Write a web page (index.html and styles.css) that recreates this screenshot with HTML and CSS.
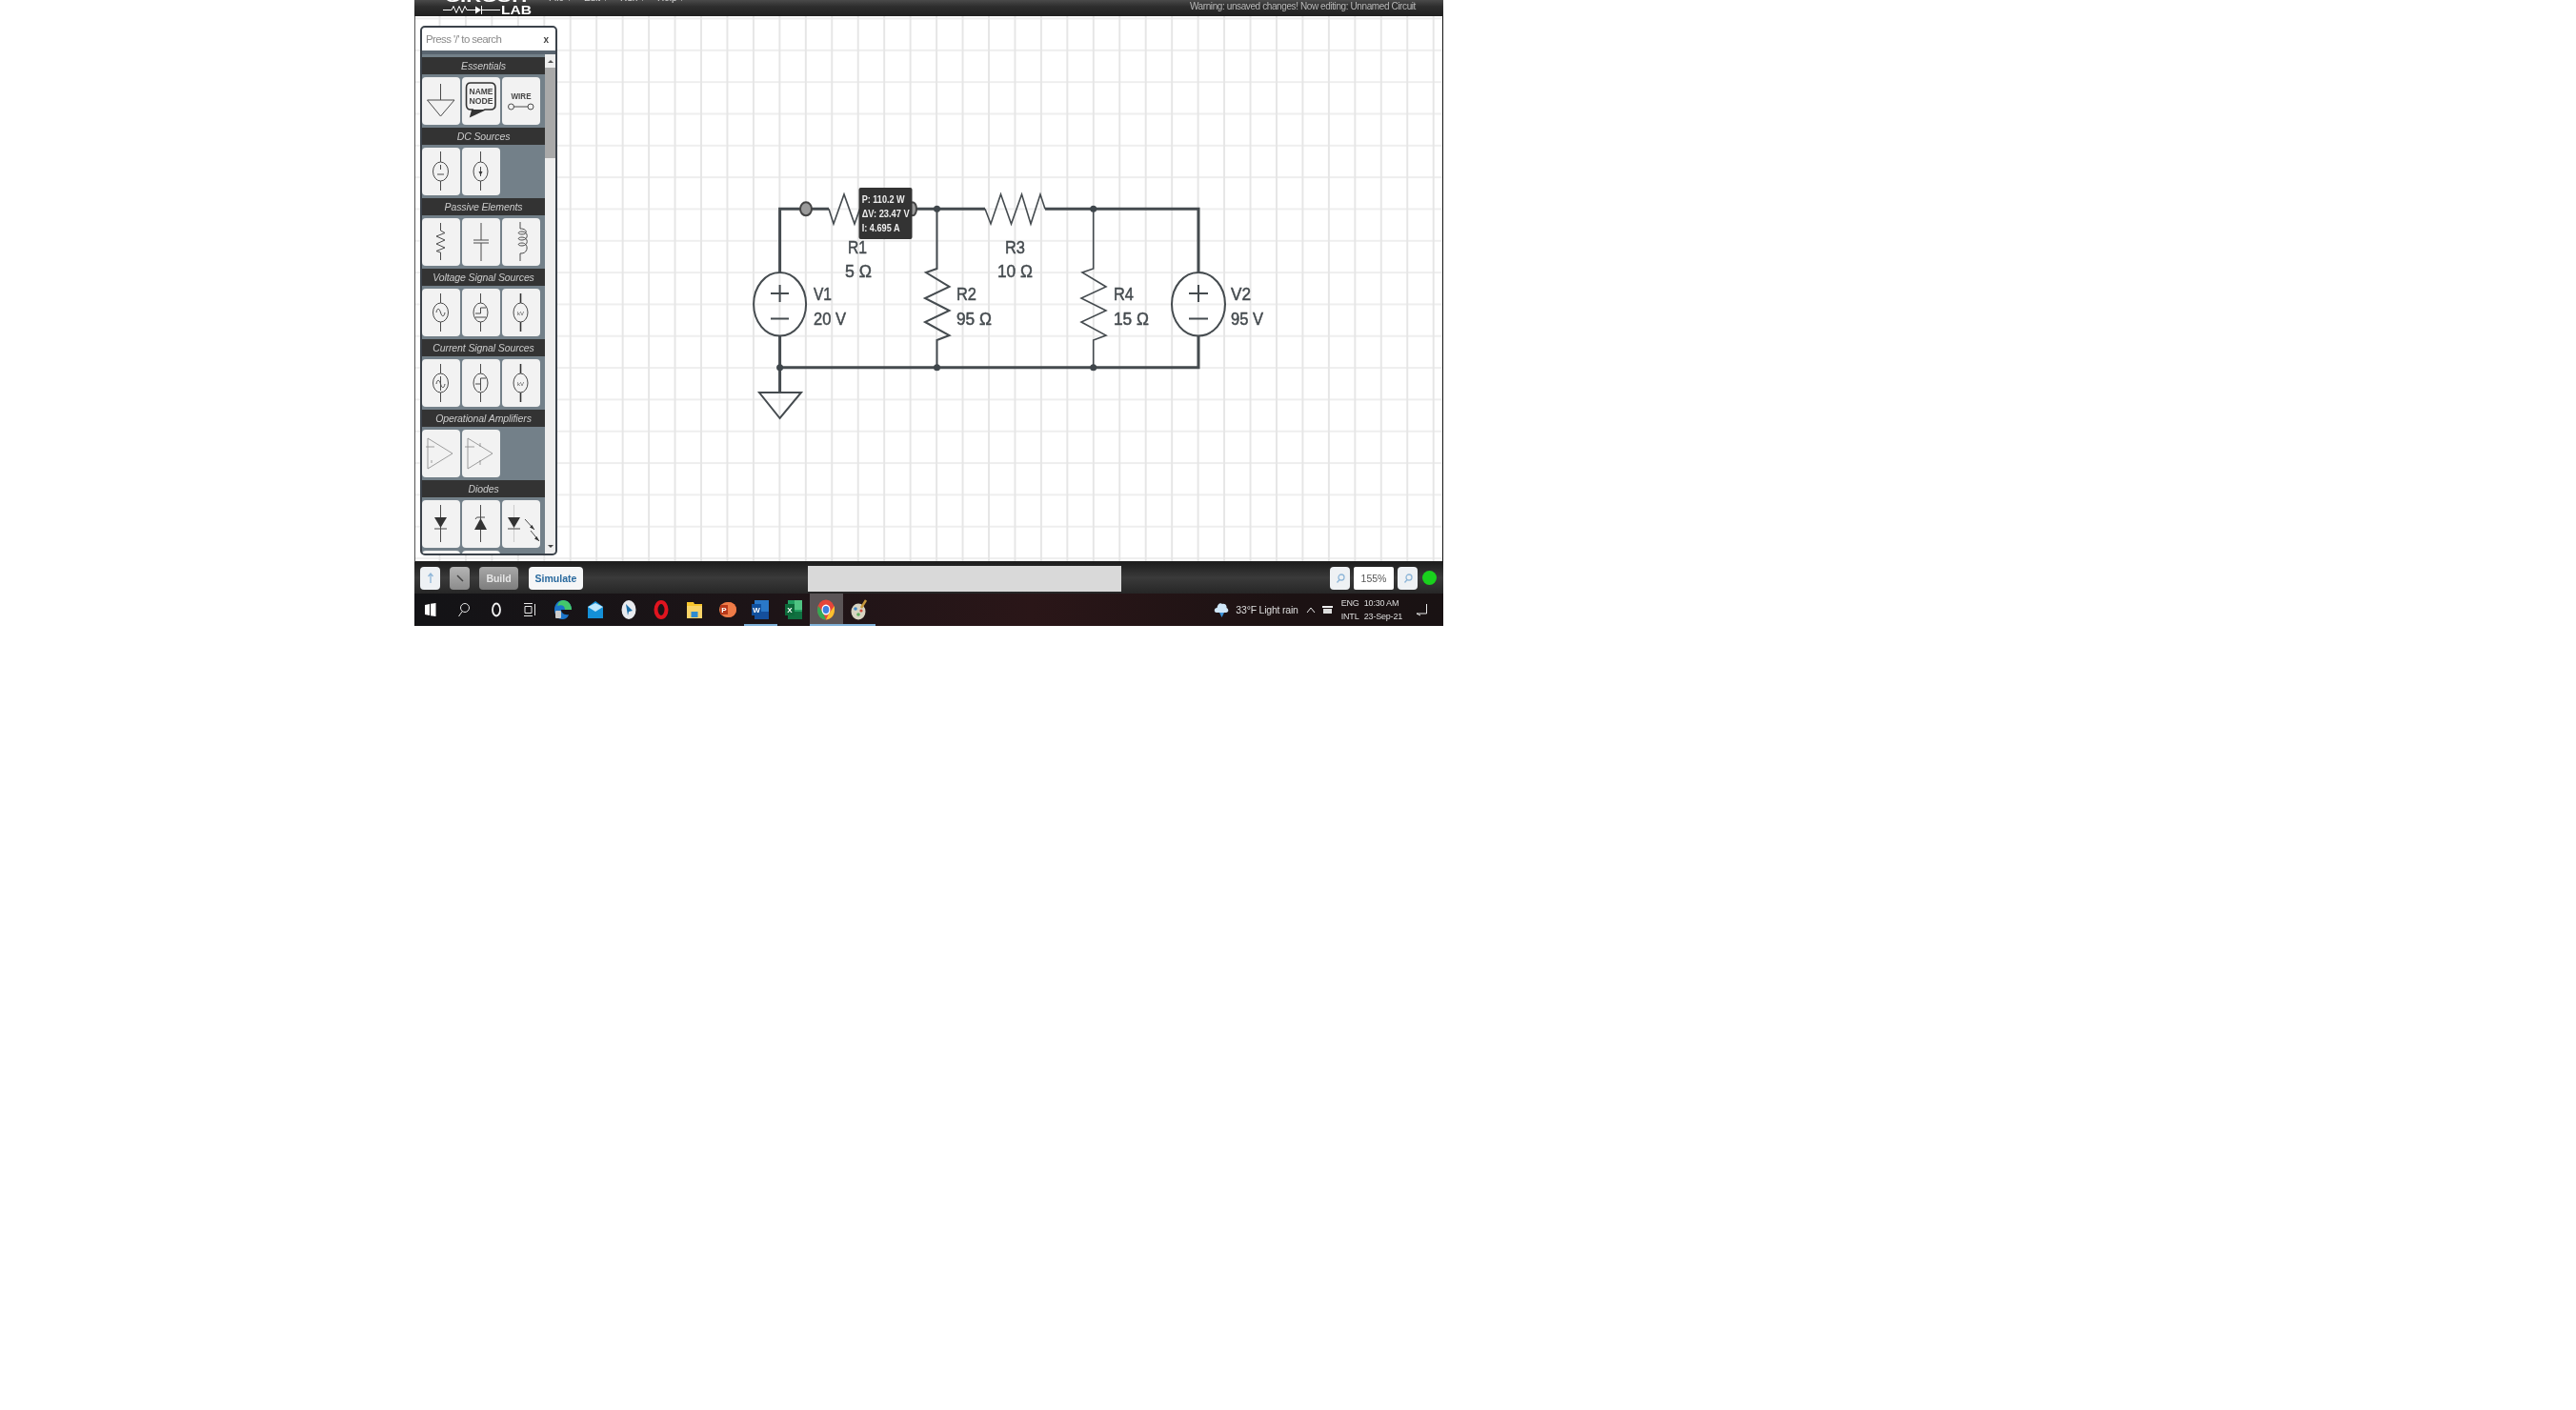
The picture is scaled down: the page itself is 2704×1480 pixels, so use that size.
FILE: index.html
```html
<!DOCTYPE html>
<html lang="en">
<head>
<meta charset="utf-8">
<title>Circuit Lab</title>
<link rel="stylesheet" href="styles.css">
</head>
<body>
<div class="app">
  <header class="topbar">
    <svg class="logo" width="96" height="17" viewBox="0 0 96 17">
      <text class="logo-top" x="2" y="2" textLength="90" lengthAdjust="spacingAndGlyphs">CIRCUIT</text>
      <path class="logo-line" d="M0 10.5H9L11 6.5 14 13.5 17 6.5 20 13.5 23 6.5 25 10.5H34"/>
      <path class="logo-fill" d="M34 6.5 40 10.5 34 14.5Z"/>
      <path class="logo-line" d="M40.5 6V15M40.5 10.5H60"/>
      <text class="logo-lab" x="61" y="15" textLength="32" lengthAdjust="spacingAndGlyphs">LAB</text>
    </svg>
    <nav class="menu">
      <span>File ▾</span><span>Edit ▾</span><span>Run ▾</span><span>Help ▾</span>
    </nav>
    <div class="status">Warning: unsaved changes! Now editing: Unnamed Circuit</div>
  </header>

  <main class="canvas">
    <aside class="palette">
      <div class="search"><span class="search-hint">Press '/' to search</span><span class="search-x">x</span></div>
      <div class="palette-body">
        <div class="list">
          <h3 class="cat-title">Essentials</h3>
          <div class="tiles">
            <div class="tile"><svg class="ico" viewBox="0 0 40 50"><path d="M19.5 7V24M5.5 24H34L19.5 41Z"/></svg></div>
            <div class="tile"><svg class="ico" viewBox="0 0 40 50"><path class="heavy" d="M9 6H30Q35 6 35 11V29Q35 34 30 34H24L9 41 11 34H9Q4.500 34 4.500 29V11Q4.500 6 9 6Z"/><path class="solid" d="M11 34H24L9 41Z"/><text class="ico-txt" x="20" y="18" text-anchor="middle" textLength="25" lengthAdjust="spacingAndGlyphs">NAME</text><text class="ico-txt" x="20" y="28" text-anchor="middle" textLength="25" lengthAdjust="spacingAndGlyphs">NODE</text></svg></div>
            <div class="tile"><svg class="ico" viewBox="0 0 40 50"><text class="ico-txt" x="20" y="23" text-anchor="middle" textLength="21" lengthAdjust="spacingAndGlyphs">WIRE</text><circle cx="9.500" cy="31" r="3"/><circle cx="30" cy="31" r="3"/><path d="M12.500 31H27"/></svg></div>
          </div>
          <h3 class="cat-title">DC Sources</h3>
          <div class="tiles">
            <div class="tile"><svg class="ico" viewBox="0 0 40 50"><path d="M19.500 4V15M19.500 35V45M19.500 18V23M16 28H23"/><ellipse cx="19.500" cy="25" rx="8" ry="10"/></svg></div>
            <div class="tile"><svg class="ico" viewBox="0 0 40 50"><path d="M19.500 4V15M19.500 35V45M19.500 20V30"/><ellipse cx="19.500" cy="25" rx="7.500" ry="10"/><path class="solid" d="M17.500 25H21.500L19.500 29Z"/></svg></div>
          </div>
          <h3 class="cat-title">Passive Elements</h3>
          <div class="tiles">
            <div class="tile"><svg class="ico" viewBox="0 0 40 50"><path d="M19.500 5V13L24 15.500 15 19 24 23 15 27 24 31 15 34.500 19.500 36V44"/></svg></div>
            <div class="tile"><svg class="ico" viewBox="0 0 40 50"><path d="M20 5V23M20 26V45M12 23H28M12 26H28"/></svg></div>
            <div class="tile"><svg class="ico" viewBox="0 0 40 50"><path d="M19 4V11C27 11 27 17 21 17 16 17 16 14 21 14 28 14 28 23 21 23 16 23 16 20 21 20 28 20 28 29 21 29 16 29 16 26 21 26 28 26 28 37 20 37H19V45"/></svg></div>
          </div>
          <h3 class="cat-title">Voltage Signal Sources</h3>
          <div class="tiles">
            <div class="tile"><svg class="ico" viewBox="0 0 40 50"><path d="M19.500 5V15M19.500 35V45M15 25C16 20 18 20 19.500 25S23 30 24 25"/><ellipse cx="19.500" cy="25" rx="8" ry="10"/></svg></div>
            <div class="tile"><svg class="ico" viewBox="0 0 40 50"><path d="M19.500 5V15M19.500 35V45M14 26H19.500V20H25M14 30H25"/><ellipse cx="19.500" cy="25" rx="7.500" ry="10"/></svg></div>
            <div class="tile"><svg class="ico" viewBox="0 0 40 50"><path class="heavy" d="M19.500 5V15M19.500 35V45"/><ellipse cx="19.500" cy="25" rx="7.500" ry="10"/><text class="ico-mini" x="19.500" y="28" text-anchor="middle">kV</text></svg></div>
          </div>
          <h3 class="cat-title">Current Signal Sources</h3>
          <div class="tiles">
            <div class="tile"><svg class="ico" viewBox="0 0 40 50"><path d="M19.500 5V15M19.500 35V45M19.500 18V33M15 26C16 21 18 21 19.500 26S23 31 24 26"/><ellipse cx="19.500" cy="25" rx="8" ry="10"/></svg></div>
            <div class="tile"><svg class="ico" viewBox="0 0 40 50"><path d="M19.500 5V15M19.500 35V45M14 26H19.500V20H25M19.500 26V33"/><ellipse cx="19.500" cy="25" rx="7.500" ry="10"/></svg></div>
            <div class="tile"><svg class="ico" viewBox="0 0 40 50"><path class="heavy" d="M19.500 5V15M19.500 35V45"/><ellipse cx="19.500" cy="25" rx="7.500" ry="10"/><text class="ico-mini" x="19.500" y="28" text-anchor="middle">kV</text></svg></div>
          </div>
          <h3 class="cat-title">Operational Amplifiers</h3>
          <div class="tiles">
            <div class="tile"><svg class="ico thin" viewBox="0 0 40 50"><path d="M6 9 32 25 6 41ZM4 18H13M10 32V35"/></svg></div>
            <div class="tile"><svg class="ico thin" viewBox="0 0 40 50"><path d="M6 9 32 25 6 41ZM3 18H13M19 14V18M19 32V37"/></svg></div>
          </div>
          <h3 class="cat-title">Diodes</h3>
          <div class="tiles">
            <div class="tile"><svg class="ico" viewBox="0 0 40 50"><path d="M19.500 5V44M13 30H26"/><path class="solid" d="M13 18H26L19.500 29Z"/></svg></div>
            <div class="tile"><svg class="ico" viewBox="0 0 40 50"><path d="M19.500 5V44M14 20 15.500 18H24"/><path class="solid" d="M13 31H26L19.500 19Z"/></svg></div>
            <div class="tile"><svg class="ico" viewBox="0 0 40 50"><path class="faint" d="M12.500 5V44"/><path d="M6 30H19M24 20 34 31M30 32 39 43"/><path class="solid" d="M6 18H19L12.500 29ZM34 31 29 28.500 31.500 26ZM39 43 34 40.500 36.500 38Z"/></svg></div>
            <div class="tile"></div>
            <div class="tile"></div>
          </div>
        </div>
        <div class="scrollbar">
          <i class="sb-up"></i>
          <i class="sb-thumb"></i>
          <i class="sb-down"></i>
        </div>
      </div>
    </aside>

    <svg class="circuit" width="1078" height="572" viewBox="436 17 1078 572">
      <g class="wire">
        <path d="M818.600 286V219.300H870M933 219.300H1034M1097 219.300H1258V286M818.600 352.500V411M818.600 385.700H1258V352.500"/>
        <path d="M870 219.300 875 235 886 204 897 235 908 204 919 235 929 204 933 219.300M1034 219.300 1040 235 1050.500 204 1061.500 235 1072.500 204 1082 235 1092 204 1097 219.300" class="zig"/>
        <path class="mid" d="M983.500 219.300V282L972 286 996.500 301 971 313 996.500 326 971 338 996.500 352 983.500 357V385.700"/>
        <path class="zig" d="M1147.700 219.300V282L1136 286 1161 301 1135 313 1161 326 1135 338 1161 352 1147.700 357V385.700"/>
        <ellipse class="mid" cx="818.600" cy="319.300" rx="27.500" ry="33.300"/>
        <ellipse class="mid" cx="1258" cy="319.300" rx="28" ry="33.300"/>
        <path class="mid" d="M809 308H828M818.600 299V317M809 334.500H828M1248 308H1268M1258 299V317M1248 334.500H1268"/>
        <path class="mid" d="M797 412H841L818.600 439Z"/>
      </g>
      <ellipse class="probe" cx="846" cy="219.300" rx="6" ry="7"/>
      <ellipse class="probe" cx="958" cy="219.300" rx="4" ry="7"/>
      <circle class="dot" cx="983.500" cy="219.300" r="3.500"/>
      <circle class="dot" cx="1147.700" cy="219.300" r="3.500"/>
      <circle class="dot" cx="818.600" cy="385.700" r="3.500"/>
      <circle class="dot" cx="983.500" cy="385.700" r="3.500"/>
      <circle class="dot" cx="1147.700" cy="385.700" r="3.500"/>
      <g class="label">
        <text x="890" y="266" textLength="20" lengthAdjust="spacingAndGlyphs">R1</text>
        <text x="887" y="291" textLength="28" lengthAdjust="spacingAndGlyphs">5 Ω</text>
        <text x="1055" y="266" textLength="21" lengthAdjust="spacingAndGlyphs">R3</text>
        <text x="1047" y="291" textLength="37" lengthAdjust="spacingAndGlyphs">10 Ω</text>
        <text x="854" y="315" textLength="19" lengthAdjust="spacingAndGlyphs">V1</text>
        <text x="854" y="340.500" textLength="34" lengthAdjust="spacingAndGlyphs">20 V</text>
        <text x="1004" y="315" textLength="21" lengthAdjust="spacingAndGlyphs">R2</text>
        <text x="1004" y="340.500" textLength="37" lengthAdjust="spacingAndGlyphs">95 Ω</text>
        <text x="1169" y="315" textLength="21" lengthAdjust="spacingAndGlyphs">R4</text>
        <text x="1169" y="340.500" textLength="37" lengthAdjust="spacingAndGlyphs">15 Ω</text>
        <text x="1292" y="315" textLength="21" lengthAdjust="spacingAndGlyphs">V2</text>
        <text x="1292" y="340.500" textLength="34" lengthAdjust="spacingAndGlyphs">95 V</text>
      </g>
      <rect class="tip" x="901.500" y="197" width="56" height="54" rx="2"/>
      <g class="tip-text">
        <text x="904.700" y="212.700" textLength="45" lengthAdjust="spacingAndGlyphs">P: 110.2 W</text>
        <text x="904.700" y="227.700" textLength="50" lengthAdjust="spacingAndGlyphs">ΔV: 23.47 V</text>
        <text x="904.700" y="242.700" textLength="40" lengthAdjust="spacingAndGlyphs">I: 4.695 A</text>
      </g>
    </svg>
  </main>

  <section class="toolbar">
    <button class="btn btn-sq btn-light"><svg width="10" height="12" viewBox="0 0 10 12"><path class="tb-blue" d="M5 1V11M2.500 4 5 1 7.500 4"/></svg></button>
    <button class="btn btn-sq btn-grey"><svg width="10" height="12" viewBox="0 0 10 12"><path class="tb-dark" d="M2 3 8 9"/></svg></button>
    <button class="btn btn-mode btn-build">Build</button>
    <button class="btn btn-mode btn-sim">Simulate</button>
    <div class="progress"></div>
    <div class="zoom">
      <button class="btn btn-sq btn-light"><svg width="10" height="12" viewBox="0 0 10 12"><circle class="tb-blue" cx="6" cy="5" r="3"/><path class="tb-blue" d="M4 7.500 1.500 10.500"/></svg></button>
      <div class="zoom-val">155%</div>
      <button class="btn btn-sq btn-light"><svg width="10" height="12" viewBox="0 0 10 12"><circle class="tb-blue" cx="6" cy="5" r="3"/><path class="tb-blue" d="M4 7.500 1.500 10.500"/></svg></button>
      <span class="led"></span>
    </div>
  </section>

  <footer class="taskbar">
    <div class="tasks">
      <span class="task"><svg width="14" height="16" viewBox="0 0 14 16"><path fill="#fff" d="M1 3 6 2V14L1 13ZM7 1.800 12.500 1V15L7 14.200Z"/></svg></span>
      <span class="task"><svg width="14" height="18" viewBox="0 0 14 18"><circle class="ln" cx="8" cy="7" r="4.500"/><path class="ln" d="M5 11 1.500 16"/></svg></span>
      <span class="task"><svg width="12" height="18" viewBox="0 0 12 18"><ellipse class="ln2" cx="6" cy="9" rx="4" ry="6.500"/></svg></span>
      <span class="task"><svg width="14" height="18" viewBox="0 0 14 18"><path class="ln" d="M1 2.500H10M1 15.500H10M2 5.500H9V12.500H2ZM12.500 3V15"/></svg></span>
      <span class="task"><svg width="20" height="22" viewBox="0 0 20 22"><path fill="#1b74c9" d="M10 1C15 1 19 5 19 11H8C8 14 11 17 16 16 15 20 12 21 9 21 4 21 1 16 1 11 1 5 5 1 10 1Z"/><path fill="#43c76b" d="M10 1C15 1 19 5 19 11H12C12 7 9 5 4 7 5 3 7 1 10 1Z"/><rect x="2" y="12" width="6" height="8" rx="1" fill="#ccc"/></svg></span>
      <span class="task"><svg width="18" height="20" viewBox="0 0 18 20"><path fill="#1490d8" d="M1 7 9 1 17 7V19H1Z"/><path fill="#bfe7fb" d="M1 7 9 12 17 7 9 3Z"/></svg></span>
      <span class="task"><svg width="16" height="22" viewBox="0 0 16 22"><ellipse cx="8" cy="11" rx="7.500" ry="10" fill="#e8eaee"/><path fill="#1b6ea8" d="M5 5 12 12 8 13 7 17Z"/></svg></span>
      <span class="task"><svg width="16" height="22" viewBox="0 0 16 22"><ellipse cx="8" cy="11" rx="5.500" ry="8" fill="none" stroke="#e0141f" stroke-width="4"/></svg></span>
      <span class="task"><svg width="16" height="20" viewBox="0 0 16 20"><path fill="#f7c52c" d="M0 2H7L8 4H16V19H0Z"/><rect y="6" width="16" height="13" fill="#f8d468"/><rect x="4.500" y="12" width="7" height="6" fill="#2f8ccf"/></svg></span>
      <span class="task"><svg width="18" height="20" viewBox="0 0 18 20"><circle cx="10" cy="10" r="8" fill="#ef6a3a"/><ellipse cx="9" cy="10" rx="9" ry="8" fill="#ee7b47"/><rect x="1" y="5" width="8" height="10" fill="#b8391a"/><text class="ti" x="5" y="13" text-anchor="middle">P</text></svg></span>
      <span class="task"><svg width="18" height="22" viewBox="0 0 18 22"><rect x="3" y="1" width="15" height="20" fill="#2a78c8"/><rect x="3" y="13" width="15" height="8" fill="#154f9c"/><rect y="5" width="10" height="12" fill="#10509e"/><text class="ti" x="5" y="14" text-anchor="middle">W</text></svg></span>
      <span class="task"><svg width="18" height="22" viewBox="0 0 18 22"><rect x="3" y="1" width="15" height="20" fill="#22a062"/><rect x="10" y="1" width="8" height="10" fill="#4fc382"/><rect x="3" y="13" width="15" height="8" fill="#107040"/><rect y="5" width="10" height="12" fill="#0d6a3a"/><text class="ti" x="5" y="14" text-anchor="middle">X</text></svg></span>
      <span class="task task-on task-mark"><svg width="18" height="22" viewBox="0 0 18 22"><ellipse cx="9" cy="11" rx="9" ry="10.500" fill="#e5453a"/><path fill="#34a853" d="M1 7 6 14 9 21.500C3 21 0 17 0 11Z"/><path fill="#fbc02d" d="M18 7 12 15 9 21.500C15 21 18 16 18 11Z"/><ellipse cx="9" cy="11" rx="4.500" ry="5.500" fill="#fff"/><ellipse cx="9" cy="11" rx="3.300" ry="4" fill="#3f7fe0"/></svg></span>
      <span class="task task-mark"><svg width="18" height="22" viewBox="0 0 18 22"><ellipse cx="8" cy="13" rx="7.500" ry="8.500" fill="#d8d4c2"/><circle cx="5" cy="10" r="1.800" fill="#3f87c8"/><circle cx="8" cy="16" r="1.800" fill="#5fae5f"/><circle cx="11" cy="12" r="1.600" fill="#d34e3e"/><path d="M11 9 16 1" stroke="#c6983c" stroke-width="2.500"/></svg></span>
    </div>
    <div class="tray">
      <svg class="cloud" width="16" height="18" viewBox="0 0 16 18"><path fill="#cfe6f8" d="M3 12C0 12 0 7 3.500 7 4 3 7 1 9 3 13 2 14 6 13.500 7 16 8 16 12 13 12Z"/><path fill="#3b92d9" d="M6 12H11L8.500 17Z"/></svg>
      <span class="weather">33°F Light rain</span>
      <svg width="10" height="8" viewBox="0 0 10 8"><path class="ln" d="M1 7 5 2 9 7"/></svg>
      <svg class="net" width="11" height="10" viewBox="0 0 11 10"><rect y="1" width="11" height="2" fill="#eee"/><rect x="1" y="4" width="9" height="5" fill="#ddd"/></svg>
      <div class="clock">
        <span>ENG</span><span>10:30 AM</span>
        <span>INTL</span><span>23-Sep-21</span>
      </div>
      <svg class="notify" width="13" height="14" viewBox="0 0 13 14"><path class="ln" d="M11.500 1V11H1M1 11 5 13"/></svg>
    </div>
  </footer>
</div>
</body>
</html>
```

FILE: styles.css
```css
* { box-sizing: border-box; }
html, body { margin: 0; padding: 0; background: #fff; }
body { font-family: "Liberation Sans", Arial, sans-serif; height: 1480px; overflow: hidden; }

.app { margin-left: 435px; width: 1080px; height: 657px; display: flex; flex-direction: column; overflow: hidden; filter: blur(.4px); }

/* top bar */
.topbar { height: 17px; flex: none; display: flex; overflow: hidden; background: linear-gradient(#4a4a4a, #2e2e2e 40%, #1f1f1f); color: #ddd; }
.logo { margin-left: 30px; flex: none; }
.logo-top { font: bold 14px "Liberation Sans", sans-serif; fill: #fff; }
.logo-lab { font: bold 13px "Liberation Sans", sans-serif; fill: #fff; }
.logo-line { fill: none; stroke: #fff; stroke-width: 1; }
.logo-fill { fill: #fff; }
.menu { display: flex; gap: 13px; margin: -8px 0 0 15px; font-size: 10px; color: #ddd; }
.status { margin-left: auto; margin-right: 29px; font-size: 10px; line-height: 13px; letter-spacing: -.4px; color: #b8b8b8; white-space: nowrap; }

/* canvas */
.canvas {
  position: relative; flex: 1; padding: 10px 0 0 5px;
  border-left: 1px solid #555; border-right: 1px solid #111; border-bottom: 1px solid #222;
  background-color: #fff;
  background-image: linear-gradient(90deg, #e6e6e6 1.500px, transparent 1.500px), linear-gradient(#eeeeee 2px, transparent 2px);
  background-size: 27.460px 33.330px;
  background-position: 24.500px 0, 0 1.500px;
}
.circuit { position: absolute; left: 0; top: 0; }

/* palette */
.palette { position: relative; z-index: 1; width: 144px; height: 556px; display: flex; flex-direction: column; border: 2px solid #3b424a; border-right-width: 2.500px; border-radius: 5px; background: #5a6570; overflow: hidden; }
.search { flex: none; height: 24px; padding: 0 7px 0 4px; display: flex; align-items: center; justify-content: space-between; background: #fff; }
.search-hint { font-size: 11.500px; letter-spacing: -.6px; color: #8a8a8a; }
.search-x { font-size: 10px; font-weight: bold; color: #444; }
.palette-body { margin-top: 4px; flex: 1; min-height: 0; display: flex; }
.list { flex: 1; min-width: 0; padding-top: 3px; background: #738089; overflow: hidden; }
.cat-title { margin: 0; height: 18px; background: #333; color: #ccc; font-size: 10.500px; font-weight: normal; font-style: italic; line-height: 18px; text-align: center; letter-spacing: -.1px; }
.tiles { display: flex; flex-wrap: wrap; gap: 3px 2px; padding: 3px 0; min-height: 56px; }
.tile { width: 40px; height: 50px; border-radius: 4px; background: #f2f2f2; }
.ico { display: block; width: 40px; height: 50px; fill: none; stroke: #4a4a4a; stroke-width: 1; }
.ico.thin { stroke: #888; stroke-width: .8px; }
.ico .heavy { stroke: #333; stroke-width: 1.600px; }
.ico .solid { fill: #333; stroke: none; }
.ico .faint { stroke: #ccc; }
.ico-txt { font: bold 9.500px "Liberation Sans", sans-serif; fill: #444; stroke: none; }
.ico-mini { font: 6px "Liberation Sans", sans-serif; fill: #555; stroke: none; }

.scrollbar { flex: none; width: 11px; position: relative; background: #eee; display: flex; flex-direction: column; align-items: stretch; }
.sb-up { height: 0; margin: 6px auto 0; border: 3px solid transparent; border-top: 0; border-bottom: 3px solid #555; }
.sb-thumb { height: 95px; margin-top: 5px; background: #a9a9a9; }
.sb-down { height: 0; margin: auto auto 6px; border: 3px solid transparent; border-bottom: 0; border-top: 3px solid #444; }

/* circuit */
.wire path, .wire ellipse { fill: none; stroke: #454b4f; stroke-width: 3; }
.wire .zig { stroke-width: 1.600px; }
.wire .mid { stroke-width: 2px; }
.probe { fill: #9a9a9a; stroke: #444; stroke-width: 2; }
.dot { fill: #3f464b; }
.label text { font: 18px "Liberation Sans", sans-serif; fill: #454b4f; stroke: #454b4f; stroke-width: .5px; }
.tip { fill: #333; }
.tip-text text { font: bold 11px "Liberation Sans", sans-serif; fill: #eee; }

/* toolbar */
.toolbar { flex: none; height: 33px; padding: 5px 7px 0 6px; display: flex; align-items: flex-start; background: linear-gradient(#1d1d1d, #3a3a3a 50%, #262626); }
.btn { padding: 0; border: 0; height: 24px; border-radius: 4px; font-family: "Liberation Sans", sans-serif; font-size: 10.500px; font-weight: bold; display: flex; align-items: center; justify-content: center; }
.btn-sq { width: 21px; }
.btn-light { background: #eef1f4; }
.btn-grey { background: linear-gradient(#b5b5b5, #8b8b8b); margin-left: 10px; }
.btn-mode { margin-left: 10px; }
.btn-build { width: 41px; background: linear-gradient(#a8a8a8, #7d7d7d); color: #e6e6e6; }
.btn-sim { width: 57px; margin-left: 11px; background: #f5f6f7; color: #2a6a9e; }
.progress { width: 329px; height: 27px; margin: -1px 0 0 236px; background: #d9d9d9; }
.zoom { margin-left: auto; display: flex; gap: 4px; align-items: flex-start; }
.zoom-val { width: 42px; height: 24px; background: #fff; color: #555; font-size: 10.500px; line-height: 24px; text-align: center; border-radius: 2px; }
.led { width: 15px; height: 15px; margin: 4px 0 0 1px; border-radius: 50%; background: #19d11d; }
.tb-blue { fill: none; stroke: #8fb6d8; stroke-width: 1.300px; }
.tb-dark { fill: none; stroke: #444; stroke-width: 1.500px; }

/* taskbar */
.taskbar { flex: none; height: 34px; display: flex; background: linear-gradient(90deg, #131316, #1d1417 35%, #2a1618 60%, #1c1213 85%, #191213); color: #e4e4e4; }
.tasks { display: flex; margin-left: 0; }
.task { width: 34.600px; height: 34px; display: flex; align-items: center; justify-content: center; }
.task-on { background: #5b5557; }
.task-mark { box-shadow: inset 0 -2px 0 #7fb1d8; }
.task:nth-child(11) { box-shadow: inset 0 -2px 0 #7fb1d8; }
.ln { fill: none; stroke: #e8e8e8; stroke-width: 1; }
.ln2 { fill: none; stroke: #f2f2f2; stroke-width: 1.800px; }
.ti { font: bold 8px "Liberation Sans", sans-serif; fill: #fff; }
.tray { margin-left: auto; display: flex; align-items: center; gap: 8px; padding-right: 16px; }
.weather { margin-left: -1px; font-size: 10.500px; letter-spacing: -.2px; color: #ddd; white-space: nowrap; }
.net { margin-left: -1px; }
.clock { display: grid; grid-template-columns: 24px auto; row-gap: 2px; margin-left: 1px; font-size: 9px; line-height: 12px; letter-spacing: -.2px; color: #ddd; }
.notify { margin-left: 6px; }
```
